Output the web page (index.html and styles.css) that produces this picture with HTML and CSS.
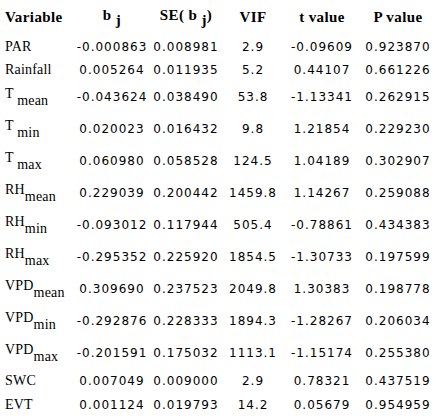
FILE: index.html
```html
<!DOCTYPE html>
<html lang="en">
<head>
    <meta charset="UTF-8">
    <title>Regression coefficients</title>
    <link rel="stylesheet" href="styles.css">
</head>
<body>

<table class="stats">
    <colgroup>
        <col class="c-var">
        <col class="c-b">
        <col class="c-se">
        <col class="c-vif">
        <col class="c-t">
        <col class="c-p">
    </colgroup>
    <tr class="head">
        <th class="label">Variable</th>
        <th>b <sub>j</sub></th>
        <th>SE( b <sub>j</sub>)</th>
        <th>VIF</th>
        <th>t value</th>
        <th>P value</th>
    </tr>
    <tr class="plain">
        <td class="label">PAR</td>
        <td>-0.000863</td><td>0.008981</td><td>2.9</td><td>-0.09609</td><td>0.923870</td>
    </tr>
    <tr class="plain">
        <td class="label">Rainfall</td>
        <td>0.005264</td><td>0.011935</td><td>5.2</td><td>0.44107</td><td>0.661226</td>
    </tr>
    <tr class="tall">
        <td class="label">T <sub>mean</sub></td>
        <td>-0.043624</td><td>0.038490</td><td>53.8</td><td>-1.13341</td><td>0.262915</td>
    </tr>
    <tr class="tall">
        <td class="label">T <sub>min</sub></td>
        <td>0.020023</td><td>0.016432</td><td>9.8</td><td>1.21854</td><td>0.229230</td>
    </tr>
    <tr class="tall">
        <td class="label">T <sub>max</sub></td>
        <td>0.060980</td><td>0.058528</td><td>124.5</td><td>1.04189</td><td>0.302907</td>
    </tr>
    <tr class="tall">
        <td class="label">RH<sub>mean</sub></td>
        <td>0.229039</td><td>0.200442</td><td>1459.8</td><td>1.14267</td><td>0.259088</td>
    </tr>
    <tr class="tall">
        <td class="label">RH<sub>min</sub></td>
        <td>-0.093012</td><td>0.117944</td><td>505.4</td><td>-0.78861</td><td>0.434383</td>
    </tr>
    <tr class="tall">
        <td class="label">RH<sub>max</sub></td>
        <td>-0.295352</td><td>0.225920</td><td>1854.5</td><td>-1.30733</td><td>0.197599</td>
    </tr>
    <tr class="tall">
        <td class="label">VPD<sub>mean</sub></td>
        <td>0.309690</td><td>0.237523</td><td>2049.8</td><td>1.30383</td><td>0.198778</td>
    </tr>
    <tr class="tall">
        <td class="label">VPD<sub>min</sub></td>
        <td>-0.292876</td><td>0.228333</td><td>1894.3</td><td>-1.28267</td><td>0.206034</td>
    </tr>
    <tr class="tall">
        <td class="label">VPD<sub>max</sub></td>
        <td>-0.201591</td><td>0.175032</td><td>1113.1</td><td>-1.15174</td><td>0.255380</td>
    </tr>
    <tr class="plain">
        <td class="label">SWC</td>
        <td>0.007049</td><td>0.009000</td><td>2.9</td><td>0.78321</td><td>0.437519</td>
    </tr>
    <tr class="plain last">
        <td class="label">EVT</td>
        <td>0.001124</td><td>0.019793</td><td>14.2</td><td>0.05679</td><td>0.954959</td>
    </tr>
</table>

</body>
</html>
```

FILE: styles.css
```css
body {
    margin: 0;
    padding: 0;
    background-color: #fff;
    color: #000;
}

.stats {
    border-collapse: collapse;
    table-layout: fixed;
    width: 436px;
}

.c-var { width: 74px; }
.c-b   { width: 76px; }
.c-se  { width: 72px; }
.c-vif { width: 62px; }
.c-t   { width: 76px; }
.c-p   { width: 76px; }

.stats th,
.stats td {
    padding: 0;
    text-align: center;
    vertical-align: middle;
    white-space: nowrap;
}

.stats th {
    font-family: "Liberation Serif", serif;
    font-size: 15px;
    font-weight: bold;
    letter-spacing: 0.4px;
}

.stats td {
    font-family: "DejaVu Sans", sans-serif;
    font-size: 12px;
    letter-spacing: 1px;
}

.stats .label {
    text-align: left;
    padding-left: 5px;
    font-family: "Liberation Serif", serif;
    font-size: 14px;
    letter-spacing: 0.2px;
}

.stats th.label {
    font-size: 15px;
    letter-spacing: 0.4px;
}

.stats sub {
    font-size: 14px;
    vertical-align: -7px;
    line-height: 1;
}

.stats th sub {
    font-size: 15px;
    vertical-align: -5px;
}

.head  { height: 35px; }
.plain { height: 23px; }
.tall  { height: 32px; }
.last  { height: 25px; }
```
